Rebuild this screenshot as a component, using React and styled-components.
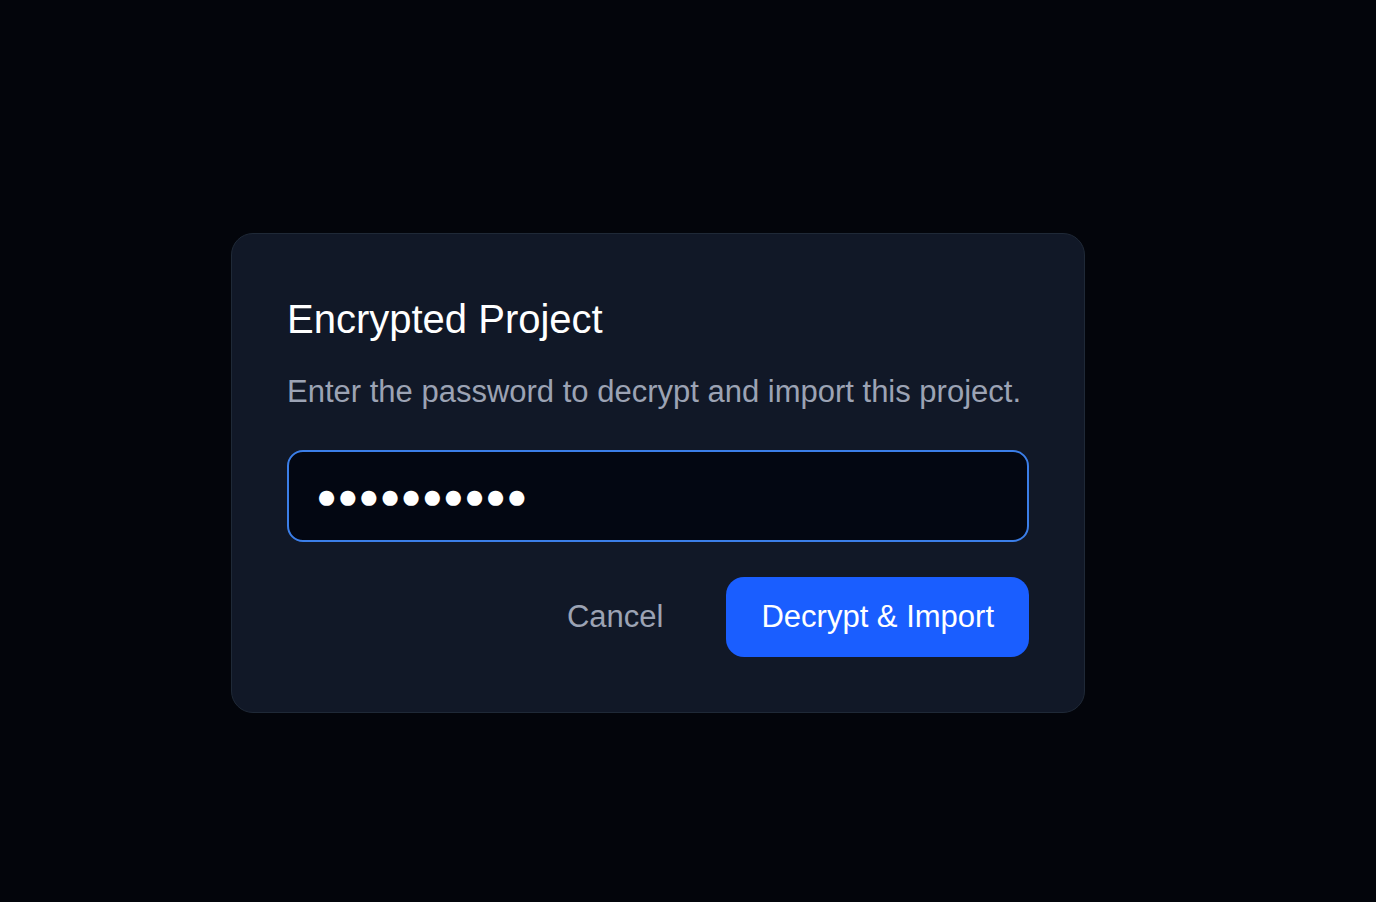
import styled, { createGlobalStyle } from 'styled-components'
import { useState } from 'react'

const GlobalStyle = createGlobalStyle`
  html, body {
    margin: 0;
    padding: 0;
    background: #03050b;
    font-family: "Liberation Sans", Arial, sans-serif;
  }
  * {
    box-sizing: border-box;
  }
`

const Page = styled.div`
  min-height: 100vh;
  padding: 233px 0 0 231px;
`

const Dialog = styled.div`
  width: 854px;
  background: #111827;
  border: 1px solid #1f2937;
  border-radius: 22px;
  padding: 55px;
  display: flex;
  flex-direction: column;
`

const Title = styled.h2`
  margin: 0;
  font-size: 40px;
  line-height: 60px;
  font-weight: 400;
  color: #ffffff;
`

const Subtitle = styled.p`
  margin: 20px 0 0;
  font-size: 31px;
  line-height: 46px;
  color: #9ca3b4;
`

const PasswordField = styled.input`
  margin-top: 35px;
  width: 100%;
  height: 92px;
  padding: 0 27px;
  background: #030712;
  border: 2px solid #3b7ee8;
  border-radius: 16px;
  color: #ffffff;
  font-family: "Liberation Sans", Arial, sans-serif;
  font-size: 35px;
  outline: none;
`

const Actions = styled.div`
  margin-top: 35px;
  display: flex;
  justify-content: flex-end;
  align-items: center;
  gap: 28px;
`

const Button = styled.button`
  height: 80px;
  padding: 0 35px;
  border: none;
  border-radius: 18px;
  font-family: "Liberation Sans", Arial, sans-serif;
  font-size: 31px;
  cursor: pointer;
  background: ${(p) => (p.$primary ? '#1a5eff' : 'transparent')};
  color: ${(p) => (p.$primary ? '#ffffff' : '#9ca3b4')};
`

export default function App() {
  const [password, setPassword] = useState('●●●●●●●●●●')

  return (
    <Page>
      <GlobalStyle />
      <Dialog>
        <Title>Encrypted Project</Title>
        <Subtitle>Enter the password to decrypt and import this project.</Subtitle>
        <PasswordField
          type="text"
          value={password}
          onChange={(e) => setPassword(e.target.value)}
        />
        <Actions>
          <Button>Cancel</Button>
          <Button $primary>Decrypt &amp; Import</Button>
        </Actions>
      </Dialog>
    </Page>
  )
}
